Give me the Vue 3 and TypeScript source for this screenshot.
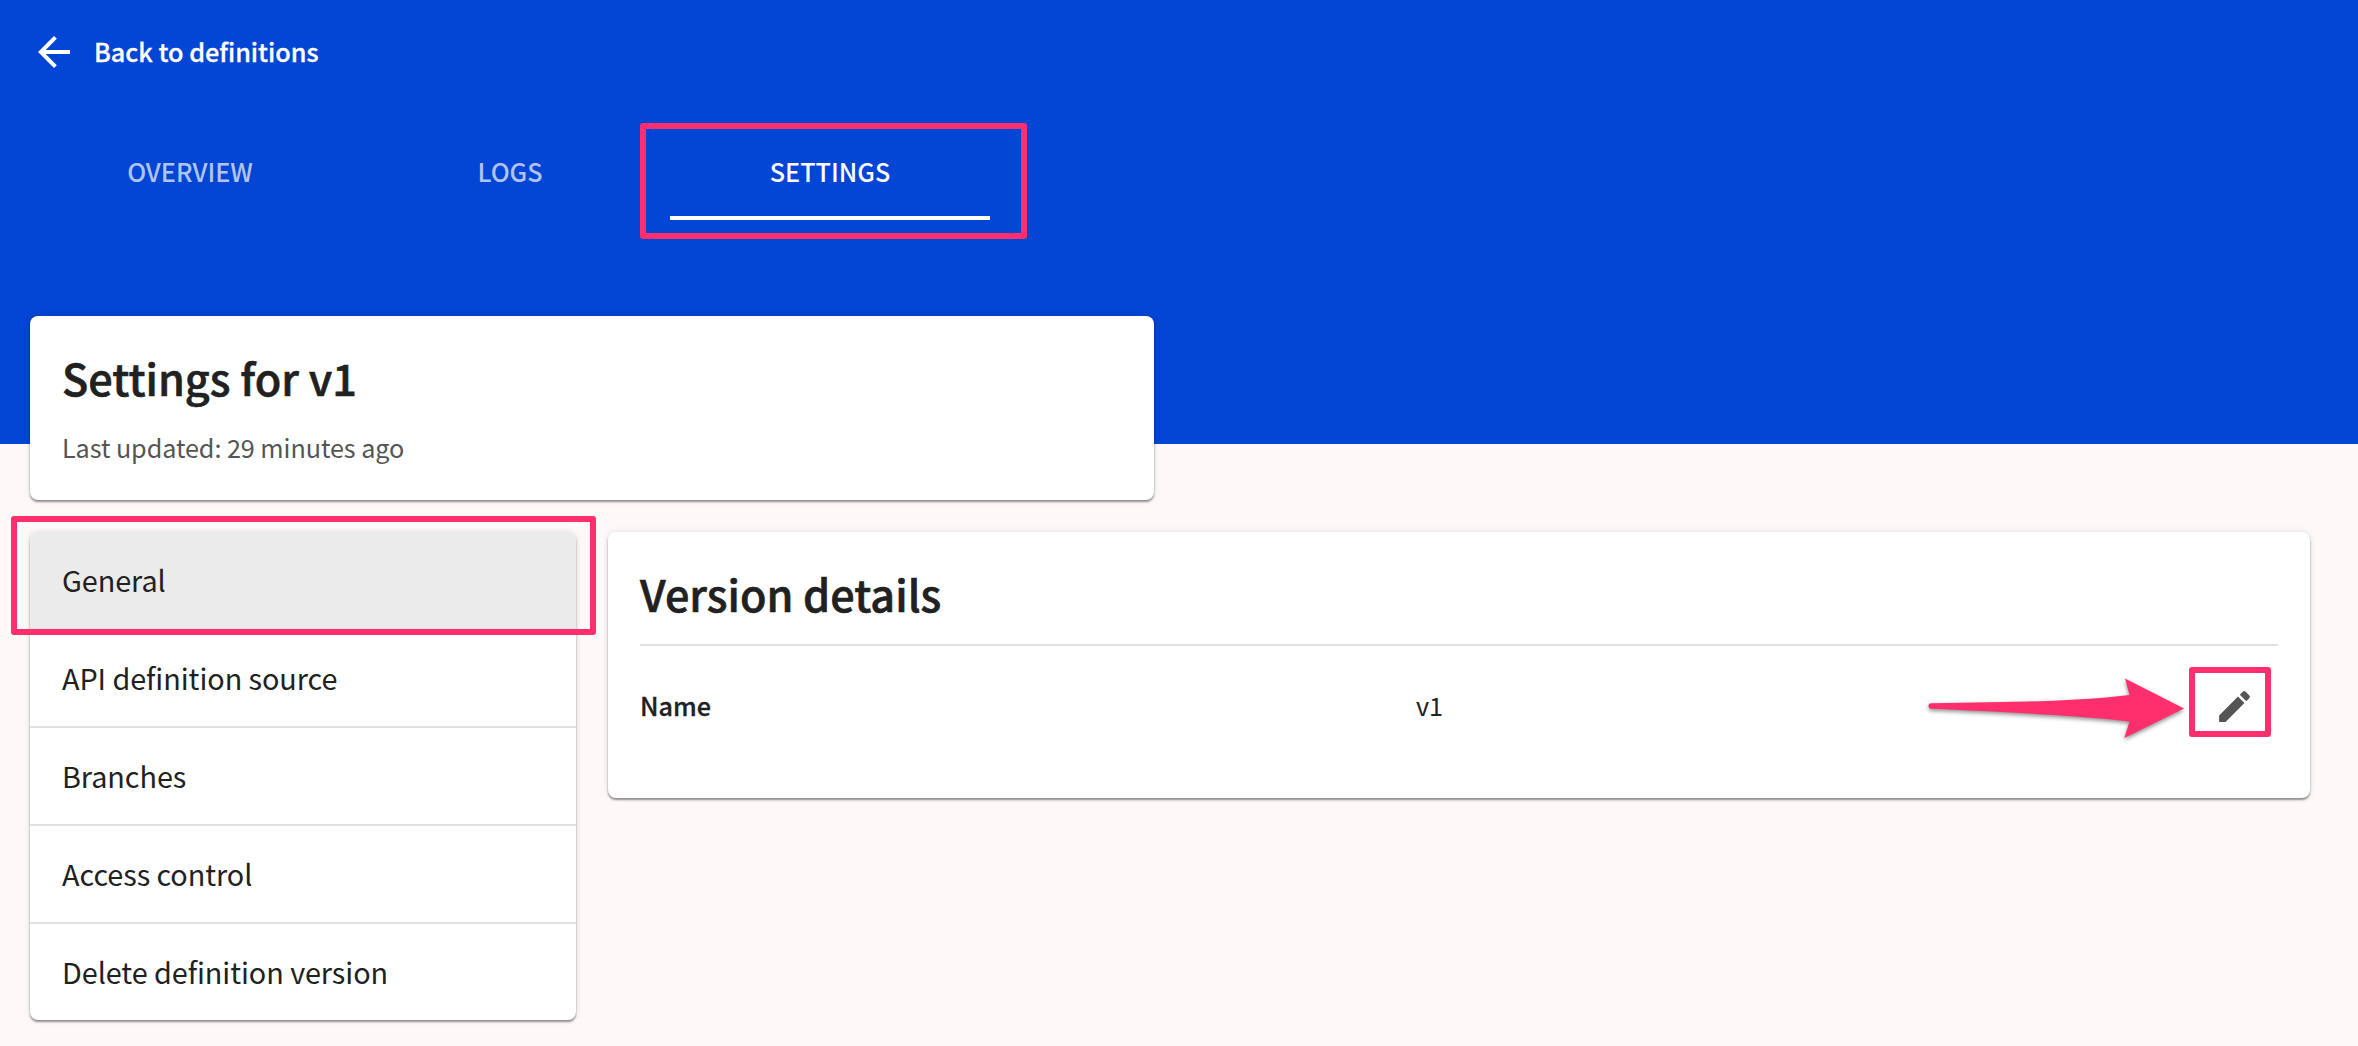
<script setup lang="ts">
import { ref } from 'vue'

const tabs: string[] = ['Overview', 'Logs', 'Settings']
const activeTab = ref('Settings')

const sections: string[] = [
  'General',
  'API definition source',
  'Branches',
  'Access control',
  'Delete definition version',
]
const activeSection = ref('General')
</script>

<template>
  <div class="page">
    <header class="hero">
      <a class="back">
        <svg class="back-icon" viewBox="0 0 24 24" width="48" height="48">
          <path d="M20 11H7.83l5.59-5.59L12 4l-8 8 8 8 1.41-1.41L7.83 13H20v-2z" fill="#fff" />
        </svg>
        <span>Back to definitions</span>
      </a>
      <nav class="tabs">
        <button
          v-for="tab in tabs"
          :key="tab"
          class="tab"
          :class="{ active: tab === activeTab }"
          @click="activeTab = tab"
        >
          {{ tab }}
          <span v-if="tab === 'Settings'" class="mark mark-tab"></span>
        </button>
      </nav>
    </header>

    <main class="content">
      <section class="card summary">
        <h1>Settings for v1</h1>
        <p>Last updated: 29 minutes ago</p>
      </section>

      <div class="columns">
        <ul class="card menu">
          <li
            v-for="section in sections"
            :key="section"
            :class="{ selected: section === activeSection }"
            @click="activeSection = section"
          >
            {{ section }}
            <span v-if="section === 'General'" class="mark mark-menu"></span>
          </li>
        </ul>

        <section class="card details">
          <h2>Version details</h2>
          <div class="row">
            <span class="label">Name</span>
            <span class="value">v1</span>
            <span class="edit">
              <svg viewBox="0 0 24 24" width="41" height="41">
                <path
                  d="M3 17.25V21h3.75L17.81 9.94l-3.75-3.75L3 17.25zM20.71 7.04a.996.996 0 0 0 0-1.41l-2.34-2.34a.996.996 0 0 0-1.41 0l-1.83 1.83 3.75 3.75 1.83-1.83z"
                  fill="#555"
                />
              </svg>
              <span class="mark mark-edit"></span>
              <svg class="arrow" viewBox="0 0 270 80" width="270" height="80">
                <path
                  d="M11 33.3 C90 32.3 158 31.3 209.5 25 L205 8.5 L264 38.6 L204.3 68 L209.5 51.5 C158 46 90 42 11 38.8 C7.6 38.4 7.6 33.6 11 33.3 Z"
                  fill="#ff2f6d"
                />
              </svg>
            </span>
          </div>
        </section>
      </div>
    </main>
  </div>
</template>

<style>
body {
  margin: 0;
  background: #fdf9f8;
}
</style>

<style scoped>
.page {
  height: 1046px;
  overflow: hidden;
  background: #fdf9f8;
  color: #212121;
  font-family: 'Noto Sans CJK SC', 'Noto Sans CJK JP', sans-serif;
  font-size: 25.2px;
}
.hero {
  box-sizing: border-box;
  height: 444px;
  padding: 28px 30px 0;
  background: #0345d4;
}
.back {
  display: flex;
  align-items: center;
  gap: 16px;
  height: 48px;
  color: #fff;
  font-weight: 500;
  -webkit-text-stroke: 0.3px currentColor;
}
.back span {
  padding-bottom: 2px;
}
.back-icon {
  display: block;
}
.tabs {
  display: flex;
  margin-top: 48px;
}
.tab {
  position: relative;
  box-sizing: border-box;
  width: 320px;
  height: 96px;
  padding: 2px 0 0;
  border: 0;
  border-bottom: 4px solid transparent;
  background: none;
  color: rgba(255, 255, 255, 0.7);
  font: inherit;
  font-weight: 500;
  text-transform: uppercase;
}
.tab.active {
  border-color: #fff;
  color: #fff;
}
.content {
  position: relative;
  margin: -128px 48px 0 30px;
}
.card {
  background: #fff;
  border-radius: 8px;
  box-shadow: 0 2px 2px rgba(0, 0, 0, 0.4), 0 0 6px rgba(0, 0, 0, 0.12);
}
.summary {
  box-sizing: border-box;
  width: 1124px;
  height: 184px;
  padding: 29px 32px 0;
}
h1,
h2,
p {
  margin: 0;
}
h1,
h2 {
  font-size: 43.2px;
  line-height: 64px;
  font-weight: 500;
  -webkit-text-stroke: 0.6px currentColor;
}
p {
  margin-top: 18px;
  line-height: 40px;
  color: #555;
  letter-spacing: -0.07px;
}
.columns {
  display: flex;
  align-items: flex-start;
  gap: 32px;
  margin-top: 32px;
}
.menu {
  width: 546px;
  margin: 0;
  padding: 0;
  list-style: none;
  font-size: 28.8px;
  letter-spacing: -0.06px;
}
.menu li {
  position: relative;
  height: 96px;
  padding: 0 32px;
  line-height: 96px;
  border-bottom: 2px solid #e0e0e0;
}
.menu li:last-child {
  border-bottom: 0;
}
.menu li.selected {
  background: #ebebeb;
  border-radius: 8px 8px 0 0;
}
.details {
  box-sizing: border-box;
  flex: 1;
  height: 266px;
  padding: 29px 32px 0;
}
.details h2 {
  height: 83px;
  border-bottom: 2px solid #e0e0e0;
}
.row {
  display: flex;
  align-items: center;
  height: 120px;
}
.label,
.value {
  padding-bottom: 2px;
}
.label {
  width: 776px;
  font-weight: 500;
  -webkit-text-stroke: 0.3px currentColor;
}
.value {
  flex: 1;
}
.edit {
  position: relative;
  display: block;
  width: 41px;
  height: 41px;
  margin-right: 23.5px;
}
.edit svg {
  display: block;
}
.mark {
  position: absolute;
  box-sizing: border-box;
  border: 6px solid #ff2f6d;
  border-radius: 3px;
  pointer-events: none;
}
.mark-tab {
  left: -30px;
  top: -1px;
  width: 387px;
  height: 116px;
}
.mark-menu {
  left: -19px;
  top: -16.5px;
  width: 585px;
  height: 119px;
  z-index: 1;
}
.mark-edit {
  left: -25px;
  top: -18.5px;
  width: 82px;
  height: 70px;
}
.edit .arrow {
  position: absolute;
  left: -293.5px;
  top: -15.5px;
  filter: drop-shadow(0 2px 2px rgba(0, 0, 0, 0.45));
}
</style>
